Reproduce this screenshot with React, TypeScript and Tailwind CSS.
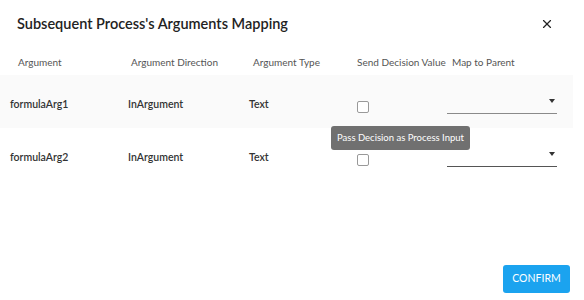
import { X } from 'lucide-react';

const rows = [
  { name: 'formulaArg1', dir: 'InArgument', type: 'Text', shaded: true, line: 'border-[#8a8a8a]' },
  { name: 'formulaArg2', dir: 'InArgument', type: 'Text', shaded: false, line: 'border-[#555]' },
];

function Select({ line }: { line: string }) {
  return (
    <div className={`relative h-[18px] w-[110px] border-b ${line}`}>
      <span className="absolute right-[2px] top-[3px] h-0 w-0 border-x-[3px] border-t-[4px] border-x-transparent border-t-[#333]" />
    </div>
  );
}

export default function App() {
  return (
    <div
      className="relative flex h-[300px] w-[584px] flex-col bg-white text-[#333]"
      style={{ fontFamily: 'Lato, "Open Sans", sans-serif' }}
    >
      <div className="flex h-[38px] items-center justify-between pl-[17px] pr-[30px] pt-[10px]">
        <h1 className="text-[14.5px] font-semibold text-[#222]">
          Subsequent Process's Arguments Mapping
        </h1>
        <X className="h-[14px] w-[14px] text-[#222]" strokeWidth={2} />
      </div>

      <div className="mt-[14px] grid h-[21px] grid-cols-[113px_122px_104px_95px_1fr] items-center whitespace-nowrap pl-[18px] text-[10px] text-[#555]">
        <span>Argument</span>
        <span>Argument Direction</span>
        <span>Argument Type</span>
        <span>Send Decision Value</span>
        <span>Map to Parent</span>
      </div>

      <div className="mt-[2px] mr-[11px]">
        {rows.map((r) => (
          <div
            key={r.name}
            className={`grid h-[53px] grid-cols-[118px_121px_108px_90px_1fr] items-center pl-[10px] pt-[6px] text-[10.5px] font-semibold text-[#333] ${
              r.shaded ? 'bg-[#fafafa]' : 'bg-white'
            }`}
          >
            <span>{r.name}</span>
            <span>{r.dir}</span>
            <span>{r.type}</span>
            <span className="pt-[5px]">
              <span className="block h-[12px] w-[12px] rounded-[2px] border border-[#999] bg-white" />
            </span>
            <div className="pt-[0px]">
              <Select line={r.line} />
            </div>
          </div>
        ))}
      </div>

      <div className="absolute left-[331px] top-[126px] rounded-[3px] bg-[#707070] px-[6px] py-[5px] text-[9.5px] leading-[14px] text-white">
        Pass Decision as Process Input
      </div>

      <div className="mt-auto flex justify-end pb-[7px] pr-[14px]">
        <button className="h-[28px] w-[67px] rounded-[3px] bg-[#1ba3ef] text-[10.5px] text-white">
          CONFIRM
        </button>
      </div>
    </div>
  );
}
